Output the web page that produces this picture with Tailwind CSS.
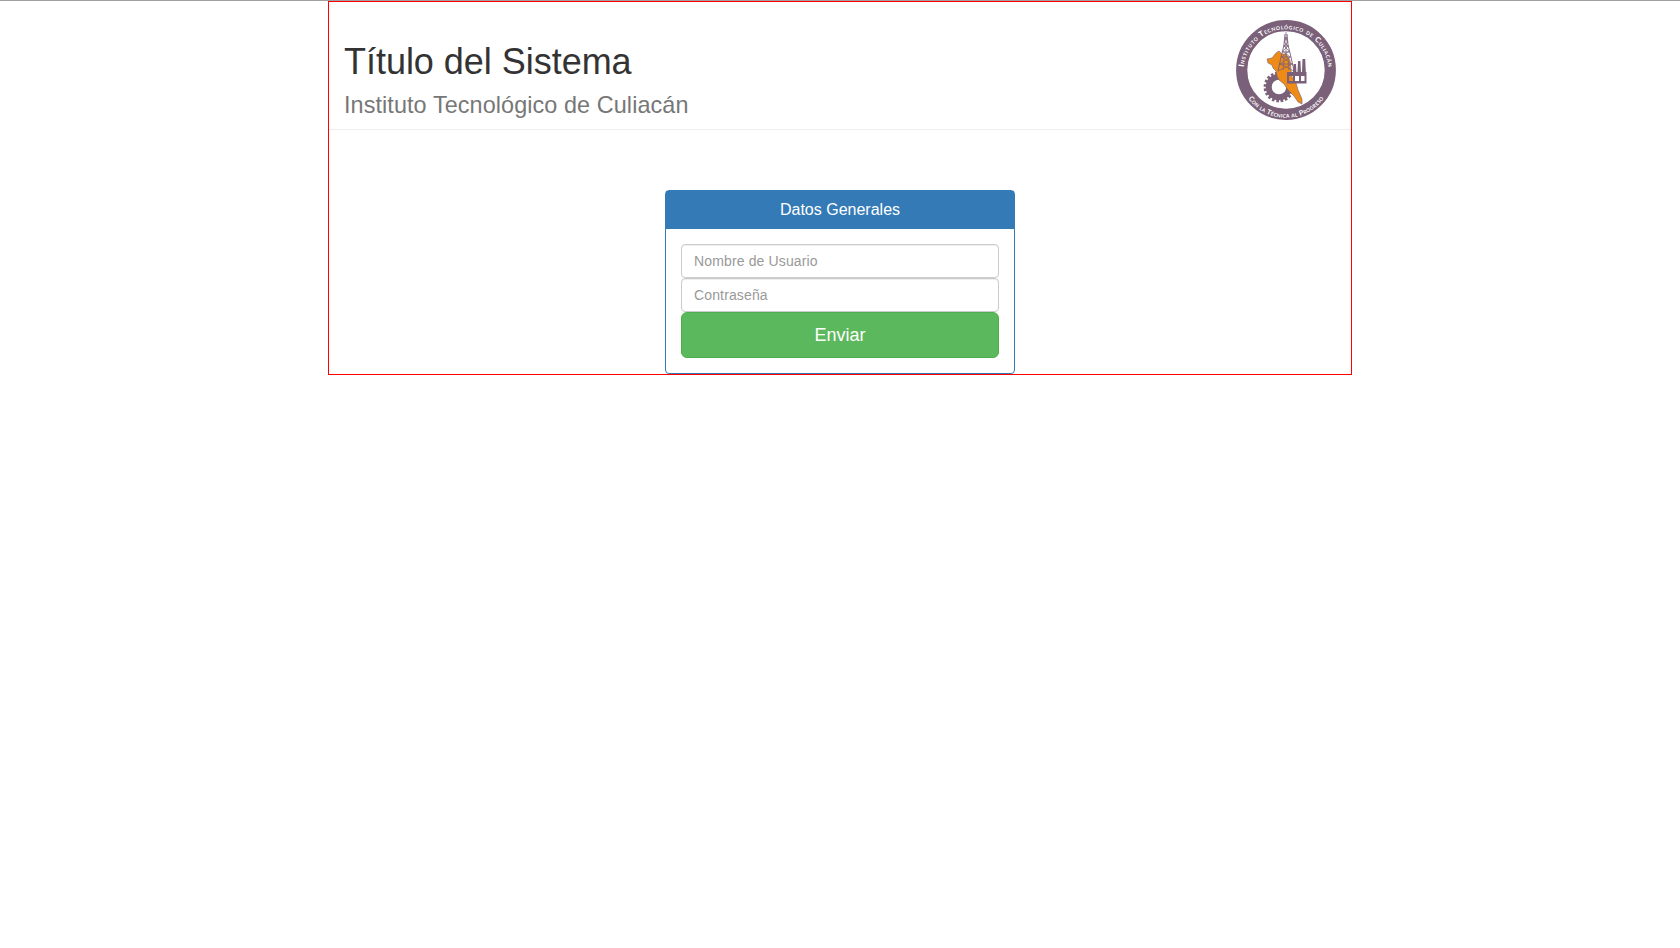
<!DOCTYPE html>
<html lang="es">
<head>
<meta charset="utf-8">
<title>Título del Sistema</title>
<script src="https://cdn.jsdelivr.net/npm/@tailwindcss/browser@4"></script>
</head>
<body class="h-[948px] overflow-hidden border-t border-[#a0a0a0] bg-white font-['Liberation_Sans',Arial,sans-serif] text-sm text-[#333]">
<div class="mx-auto h-[374px] w-[1024px] border border-[#ff0000]">
  <header class="flex h-[128px] justify-between border-b border-[#eee] px-[15px] pt-[18px]">
    <h1 class="pt-[22px] text-[36px] leading-[40px] tracking-[-0.03px]">Título del Sistema<small class="block pt-[5px] text-[23.4px] leading-[36px] tracking-[0.09px] text-[#777]">Instituto Tecnológico de Culiacán</small></h1>
    <svg class="size-[100px]" viewBox="0 0 100 100" role="img" aria-label="Instituto Tecnológico de Culiacán">
      <defs>
        <path id="topArc" d="M8.2 60A42.6 42.6 0 1 1 91.8 60"/>
        <path id="bottomArc" d="M4.4 60A46.4 46.4 0 0 0 95.6 60"/>
      </defs>
      <circle cx="50" cy="50" r="44.3" fill="#fff" stroke="#7a6078" stroke-width="11.2"/>
      <g fill="none" stroke="#7a6078">
        <circle cx="43" cy="67" r="10.3" stroke-width="6"/>
        <circle cx="43" cy="67" r="14" stroke-width="2.8" stroke-dasharray="2.6 1.8"/>
      </g>
      <path fill="#fff" d="M43 50H71V72L66 76L58 66L46 61Z"/>
      <path fill="#ee8a16" stroke="#7a6078" stroke-width=".6" d="M40 33L43 31L46 34L50 34L54 40L55 50L56 57L60 63L62 70L66 79L66 84L62 82L58 76L52 70L48 64L43 60L41 56L40 51L37 48L36 45L32 43L31 39L36 38Z"/>
      <g fill="none" stroke="#7a6078" stroke-width=".9">
        <path d="M49 14L48 25L45 37L42 51M51 14L52 25L55 37L58 51M49 18H51M47 26H53M46 32H54M45 37H55M43 44H57"/>
        <path stroke-width=".7" d="M49 17L52 22L48 26L53 31L46 37L56 44L42 51M51 17L48 22L52 26L47 31L54 37L44 44L58 51M50 12V37M48 38L47 50M52 38L53 50"/>
      </g>
      <path fill="#7a6078" fill-rule="evenodd" d="M51 52H57L57.6 44H60L60.4 52H61.5L62 41H64.4L65 52H66L66.5 39H69.2L69.8 52H70.5V63.5H51ZM53 56V61H57V56ZM59 56V61H63V56ZM65 56V61H68.5V56Z"/>
      <g fill="#fff" font-family="Lato, sans-serif" font-weight="700" font-size="7.6" style="font-variant:small-caps">
        <text><textPath href="#topArc" startOffset="50%" text-anchor="middle" textLength="124">Instituto Tecnológico de Culiacán</textPath></text>
        <text font-size="6.9"><textPath href="#bottomArc" startOffset="50%" text-anchor="middle" textLength="88">Con la Técnica al Progreso</textPath></text>
      </g>
    </svg>
  </header>
  <main class="flex justify-center pt-[60px]">
    <section class="h-[184px] w-[350px] rounded border border-[#337ab7] bg-white">
      <h2 class="flex h-[38px] items-center justify-center bg-[#337ab7] text-base text-white">Datos Generales</h2>
      <form class="flex flex-col px-[15px] pt-[15px]">
        <input class="h-[34px] rounded border border-[#ccc] px-3 tracking-[0.14px] shadow-[inset_0_1px_1px_rgba(0,0,0,0.075)] placeholder:text-[#999]" type="text" placeholder="Nombre de Usuario">
        <input class="h-[34px] rounded border border-[#ccc] px-3 tracking-[0.14px] shadow-[inset_0_1px_1px_rgba(0,0,0,0.075)] placeholder:text-[#999]" type="password" placeholder="Contraseña">
        <button class="h-[46px] rounded-md border border-[#4cae4c] bg-[#5cb85c] text-lg text-white" type="button">Enviar</button>
      </form>
    </section>
  </main>
</div>
</body>
</html>
